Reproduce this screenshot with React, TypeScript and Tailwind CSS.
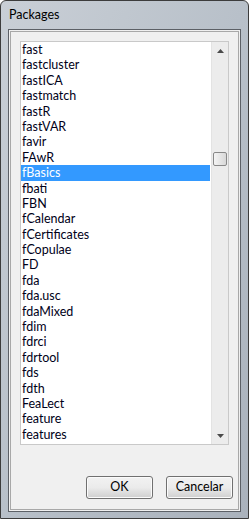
const packages = [
  "fast",
  "fastcluster",
  "fastICA",
  "fastmatch",
  "fastR",
  "fastVAR",
  "favir",
  "FAwR",
  "fBasics",
  "fbati",
  "FBN",
  "fCalendar",
  "fCertificates",
  "fCopulae",
  "FD",
  "fda",
  "fda.usc",
  "fdaMixed",
  "fdim",
  "fdrci",
  "fdrtool",
  "fds",
  "fdth",
  "FeaLect",
  "feature",
  "features",
];

function Arrow({ up }: { up?: boolean }) {
  return (
    <svg width="7" height="4" viewBox="0 0 7 4" className="block">
      {up ? <path d="M0 4 L3.5 0 L7 4 Z" fill="#4a4a4a" /> : <path d="M0 0 L3.5 4 L7 0 Z" fill="#4a4a4a" />}
    </svg>
  );
}

function Button({ label }: { label: string }) {
  return (
    <button className="w-[67px] h-[23px] rounded-[3px] border border-[#707070] bg-gradient-to-b from-[#f2f2f2] via-[#ebebeb] to-[#cfcfcf] text-[12.5px] text-black leading-none shadow-[inset_0_0_0_1px_#fbfbfb]">
      {label}
    </button>
  );
}

export default function App() {
  const selected = "fBasics";
  return (
    <div
      className="w-[249px] h-[519px] flex flex-col border border-[#3c3c3c] rounded-t-[6px] bg-gradient-to-br from-[#c9cfd6] via-[#b8c0c9] to-[#aab2bc] overflow-hidden"
      style={{ fontFamily: 'Lato, "Noto Sans", "Liberation Sans", sans-serif' }}
    >
      <div className="h-[28px] flex items-center pl-[8px] pt-[1px] text-[12.5px] text-black">Packages</div>
      <div className="flex-1 mx-[7px] mb-[6px] border border-[#5c6066] bg-[#f0f0f0] p-[1px] flex">
        <div className="flex-1 border border-[#a8a8a8] flex flex-col px-[9px] pt-[9px]">
          <div className="h-[404px] border border-[#c9c9c9] bg-white flex">
            <ul className="flex-1 text-[12.5px] leading-[15.4px] text-[#000018]">
              {packages.map((p) => (
                <li
                  key={p}
                  className={
                    p === selected
                      ? "h-[15.4px] pl-[1px] bg-[#3399ff] text-white"
                      : "h-[15.4px] pl-[1px]"
                  }
                >
                  {p}
                </li>
              ))}
            </ul>
            <div className="w-[17px] ml-[1px] flex flex-col bg-[#ececec] border-l border-[#e3e3e3]">
              <div className="h-[17px] flex items-center justify-center">
                <Arrow up />
              </div>
              <div className="h-[93px]" />
              <div className="h-[14px] mx-[1px] rounded-[2px] border border-[#888] bg-gradient-to-r from-[#f4f4f4] to-[#d8d8d8]" />
              <div className="flex-1" />
              <div className="h-[17px] flex items-center justify-center">
                <Arrow />
              </div>
            </div>
          </div>
          <div className="flex-1 flex items-end justify-end gap-[13px] -mr-[4px] pb-[10px]">
            <Button label="OK" />
            <Button label="Cancelar" />
          </div>
        </div>
      </div>
    </div>
  );
}
